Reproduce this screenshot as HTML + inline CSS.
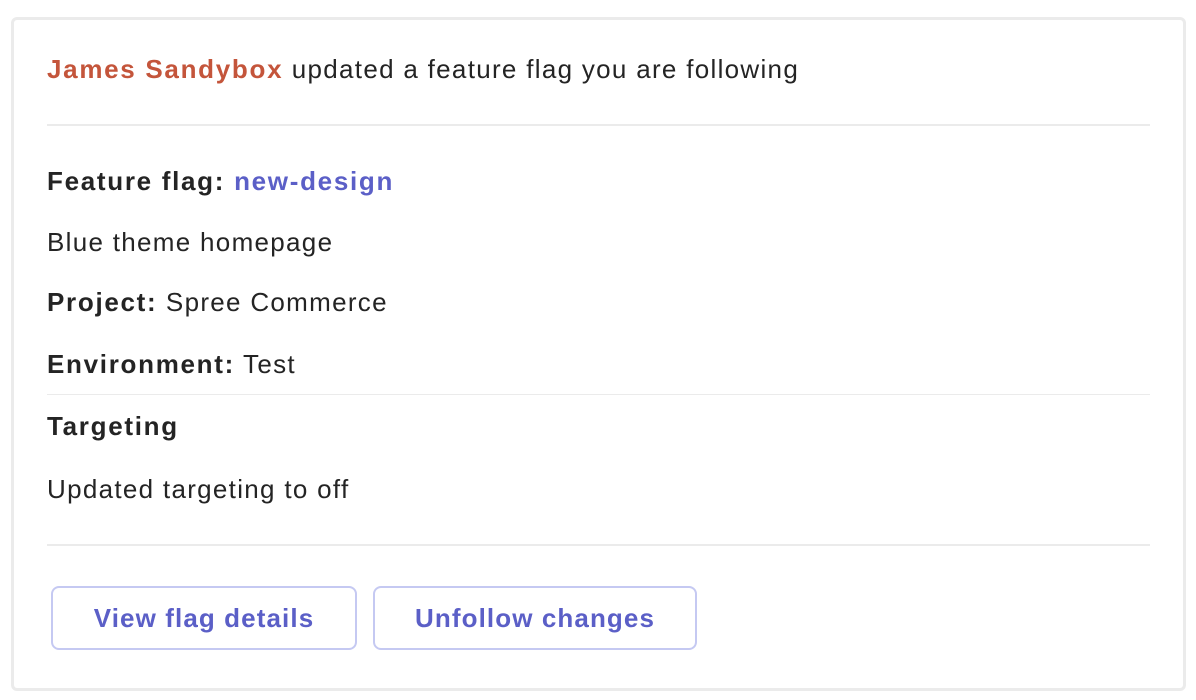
<html><head><style>
body{margin:0;width:1196px;height:700px;background:#fff;font-family:"Liberation Sans",Arial,sans-serif;color:#242424;position:relative;overflow:hidden}
.card{position:absolute;left:11px;top:17px;width:1169px;height:668px;border:3px solid #ebebeb;border-radius:6px}
.t{position:absolute;left:47px;font-size:26px;line-height:30px;white-space:nowrap;letter-spacing:1.3px}
b{font-weight:bold;letter-spacing:1.7px}
.hr{position:absolute;left:47px;width:1103px;height:2px;background:#ebebeb}
.btn{position:absolute;top:586px;height:60px;border:2px solid #c5c9f2;border-radius:8px;color:#5b5fc7;font-weight:bold;font-size:26px;display:flex;align-items:center;justify-content:center;letter-spacing:1.1px}
</style></head><body>
<div class="card"></div>
<div class="t" style="top:54px"><b style="color:#c4553b">James Sandybox</b> updated a feature flag you are following</div>
<div class="hr" style="top:124px"></div>
<div class="t" style="top:166px"><b>Feature flag: </b><b style="color:#5b5fc7">new-design</b></div>
<div class="t" style="top:227px">Blue theme homepage</div>
<div class="t" style="top:287px"><b>Project:</b> Spree Commerce</div>
<div class="t" style="top:349px"><b>Environment:</b> Test</div>
<div class="hr" style="top:394px;height:1px"></div>
<div class="t" style="top:411px"><b>Targeting</b></div>
<div class="t" style="top:474px">Updated targeting to off</div>
<div class="hr" style="top:544px"></div>
<div class="btn" style="left:51px;width:302px">View flag details</div>
<div class="btn" style="left:373px;width:320px">Unfollow changes</div>
</body></html>
